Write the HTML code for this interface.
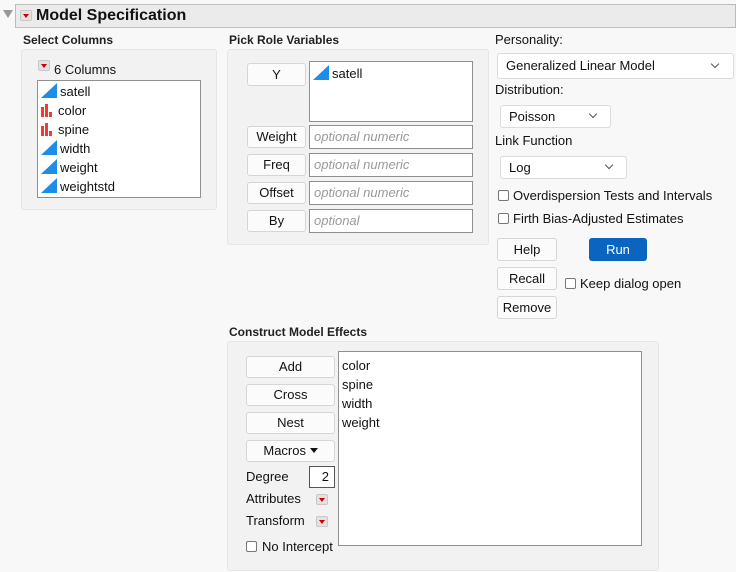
<!DOCTYPE html>
<html><head><style>
*{box-sizing:border-box}
body{margin:0;width:736px;height:572px;background:#f8f8f8;font-family:"Liberation Sans",sans-serif;font-size:13px;color:#111;position:relative;overflow:hidden}
.a{position:absolute;white-space:nowrap}
.h{font-weight:bold;font-size:12px;color:#222}
.pan{position:absolute;background:#f2f2f2;border:1px solid #e6e6e6;border-radius:3px}
.btn{position:absolute;background:#fbfbfb;border:1px solid #d6d6d6;border-radius:3px;text-align:center;font-size:13px;color:#111}
.box{position:absolute;background:#fff;border:1px solid #8f8f8f}
.ph{font-style:italic;color:#999;padding-left:4px}
.rb{position:absolute;width:12px;height:11px;background:#e8e0e0;border:1px solid #c8c8c8;border-radius:2px}
.rb:after{content:"";position:absolute;left:2px;top:3px;border-left:3px solid transparent;border-right:3px solid transparent;border-top:4px solid #c00}
.cb{position:absolute;width:11px;height:11px;border:1px solid #777;border-radius:2px;background:#fff}
.dd{position:absolute;background:#fff;border:1px solid #dcdcdc;border-radius:3px;padding-left:8px;font-size:13px}
.chev{position:absolute;width:6px;height:6px;border-right:1.3px solid #555;border-bottom:1.3px solid #555;transform:rotate(45deg)}
.tri{display:inline-block;width:0;height:0;border-left:16px solid transparent;border-bottom:15px solid #1e8de8;vertical-align:-2px;margin-right:3px}
.bar{display:inline-block;position:relative;width:14px;height:14px;vertical-align:-2px;margin-right:3px}
.bar i{position:absolute;bottom:0;width:3px;background:#ee3b36}
.li{height:19px;line-height:19px;padding-left:3px}
</style></head><body>
<div class="a" style="left:3px;top:10px;width:0;height:0;border-left:5px solid transparent;border-right:5px solid transparent;border-top:8px solid #999"></div>
<div class="a" style="left:15px;top:4px;width:721px;height:24px;background:#ebebeb;border:1px solid #bbb"></div>
<div class="rb" style="left:20px;top:10px"></div>
<div class="a" style="left:36px;top:6px;font-size:16px;font-weight:bold;line-height:20px">Model Specification</div>

<div class="a h" style="left:23px;top:32px;line-height:16px">Select Columns</div>
<div class="pan" style="left:21px;top:49px;width:196px;height:161px"></div>
<div class="rb" style="left:38px;top:60px"></div>
<div class="a" style="left:54px;top:62px;line-height:15px">6 Columns</div>
<div class="box" style="left:37px;top:80px;width:164px;height:118px;padding-top:1px">
<div class="li"><span class="tri"></span>satell</div>
<div class="li"><span class="bar"><i style="left:0;height:10px"></i><i style="left:4px;height:13px"></i><i style="left:8px;height:5px"></i></span>color</div>
<div class="li"><span class="bar"><i style="left:0;height:10px"></i><i style="left:4px;height:13px"></i><i style="left:8px;height:5px"></i></span>spine</div>
<div class="li"><span class="tri"></span>width</div>
<div class="li"><span class="tri"></span>weight</div>
<div class="li"><span class="tri"></span>weightstd</div>
</div>

<div class="a h" style="left:229px;top:32px;line-height:16px">Pick Role Variables</div>
<div class="pan" style="left:227px;top:49px;width:262px;height:196px"></div>
<div class="btn" style="left:247px;top:63px;width:59px;height:23px;line-height:21px">Y</div>
<div class="box" style="left:309px;top:61px;width:164px;height:61px;padding:3px 0 0 3px"><span class="tri"></span>satell</div>
<div class="btn" style="left:247px;top:126px;width:59px;height:22px;line-height:20px">Weight</div>
<div class="box ph" style="left:309px;top:125px;width:164px;height:24px;line-height:22px">optional numeric</div>
<div class="btn" style="left:247px;top:154px;width:59px;height:22px;line-height:20px">Freq</div>
<div class="box ph" style="left:309px;top:153px;width:164px;height:24px;line-height:22px">optional numeric</div>
<div class="btn" style="left:247px;top:182px;width:59px;height:22px;line-height:20px">Offset</div>
<div class="box ph" style="left:309px;top:181px;width:164px;height:24px;line-height:22px">optional numeric</div>
<div class="btn" style="left:247px;top:210px;width:59px;height:22px;line-height:20px">By</div>
<div class="box ph" style="left:309px;top:209px;width:164px;height:24px;line-height:22px">optional</div>

<div class="a" style="left:495px;top:32px;line-height:16px">Personality:</div>
<div class="dd" style="left:497px;top:53px;width:237px;height:26px;line-height:24px">Generalized Linear Model</div>
<div class="chev" style="left:712px;top:61px"></div>
<div class="a" style="left:495px;top:82px;line-height:16px">Distribution:</div>
<div class="dd" style="left:500px;top:105px;width:111px;height:23px;line-height:21px">Poisson</div>
<div class="chev" style="left:590px;top:111px"></div>
<div class="a" style="left:495px;top:133px;line-height:16px">Link Function</div>
<div class="dd" style="left:500px;top:156px;width:127px;height:23px;line-height:21px">Log</div>
<div class="chev" style="left:606px;top:162px"></div>
<div class="cb" style="left:498px;top:190px"></div>
<div class="a" style="left:513px;top:188px;line-height:16px">Overdispersion Tests and Intervals</div>
<div class="cb" style="left:498px;top:213px"></div>
<div class="a" style="left:513px;top:211px;line-height:16px">Firth Bias-Adjusted Estimates</div>
<div class="btn" style="left:497px;top:238px;width:60px;height:23px;line-height:21px">Help</div>
<div class="btn" style="left:589px;top:238px;width:58px;height:23px;line-height:21px;background:#0a64c0;border-color:#0a64c0;color:#fff">Run</div>
<div class="btn" style="left:497px;top:267px;width:60px;height:23px;line-height:21px">Recall</div>
<div class="cb" style="left:565px;top:278px"></div>
<div class="a" style="left:580px;top:276px;line-height:16px">Keep dialog open</div>
<div class="btn" style="left:497px;top:296px;width:60px;height:23px;line-height:21px">Remove</div>

<div class="a h" style="left:229px;top:324px;line-height:16px">Construct Model Effects</div>
<div class="pan" style="left:227px;top:341px;width:432px;height:230px"></div>
<div class="btn" style="left:246px;top:356px;width:89px;height:22px;line-height:20px">Add</div>
<div class="btn" style="left:246px;top:384px;width:89px;height:22px;line-height:20px">Cross</div>
<div class="btn" style="left:246px;top:412px;width:89px;height:22px;line-height:20px">Nest</div>
<div class="btn" style="left:246px;top:440px;width:89px;height:22px;line-height:20px">Macros <span style="display:inline-block;border-left:4px solid transparent;border-right:4px solid transparent;border-top:5px solid #111;vertical-align:2px"></span></div>
<div class="a" style="left:246px;top:469px;line-height:16px">Degree</div>
<div class="a" style="left:309px;top:466px;width:26px;height:22px;background:#fff;border:1px solid #555;text-align:right;padding-right:5px;line-height:20px">2</div>
<div class="a" style="left:246px;top:491px;line-height:16px">Attributes</div>
<div class="rb" style="left:316px;top:494px"></div>
<div class="a" style="left:246px;top:513px;line-height:16px">Transform</div>
<div class="rb" style="left:316px;top:516px"></div>
<div class="cb" style="left:246px;top:541px"></div>
<div class="a" style="left:262px;top:539px;line-height:16px">No Intercept</div>
<div class="box" style="left:338px;top:351px;width:304px;height:195px;padding:4px 0 0 3px;line-height:19px">color<br>spine<br>width<br>weight</div>
</body></html>
